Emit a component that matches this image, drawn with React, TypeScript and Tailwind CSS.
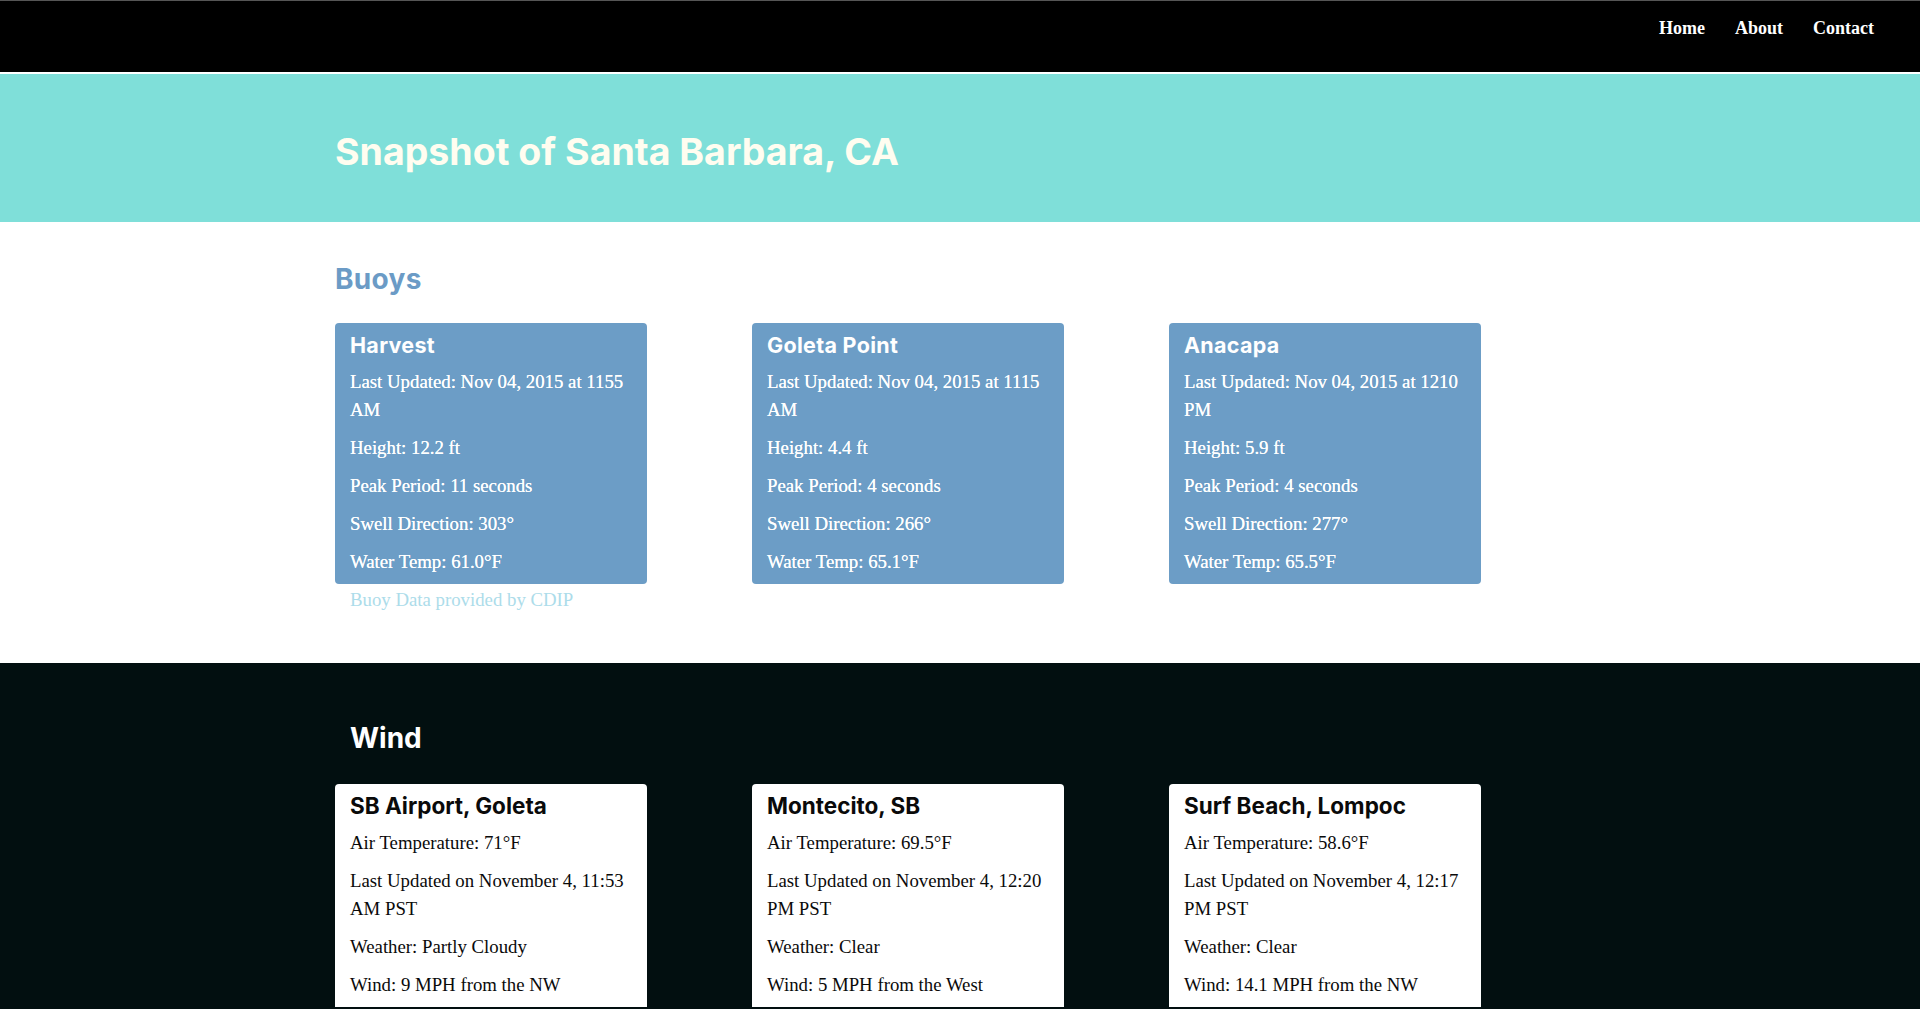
import React from 'react'

type Buoy = {
  name: string
  updated: string
  height: string
  period: string
  direction: string
  temp: string
}

type Station = {
  name: string
  air: string
  updated: string
  weather: string
  wind: string
}

const buoys: Buoy[] = [
  { name: 'Harvest', updated: 'Nov 04, 2015 at 1155 AM', height: '12.2 ft', period: '11 seconds', direction: '303°', temp: '61.0°F' },
  { name: 'Goleta Point', updated: 'Nov 04, 2015 at 1115 AM', height: '4.4 ft', period: '4 seconds', direction: '266°', temp: '65.1°F' },
  { name: 'Anacapa', updated: 'Nov 04, 2015 at 1210 PM', height: '5.9 ft', period: '4 seconds', direction: '277°', temp: '65.5°F' },
]

const stations: Station[] = [
  { name: 'SB Airport, Goleta', air: '71°F', updated: 'November 4, 11:53 AM PST', weather: 'Partly Cloudy', wind: '9 MPH from the NW' },
  { name: 'Montecito, SB', air: '69.5°F', updated: 'November 4, 12:20 PM PST', weather: 'Clear', wind: '5 MPH from the West' },
  { name: 'Surf Beach, Lompoc', air: '58.6°F', updated: 'November 4, 12:17 PM PST', weather: 'Clear', wind: '14.1 MPH from the NW' },
]

const serif = "font-['Liberation_Serif',serif]"
const sans = "font-['Inter',sans-serif]"

function BuoyCard({ buoy }: { buoy: Buoy }) {
  return (
    <div className="rounded-[4px] bg-[#6c9dc6] px-[15px] pt-[8px] pb-[8px] text-white">
      <h3 className={`${sans} mb-[9px] text-[21.5px] leading-[28px] font-bold tracking-[0.3px]`}>{buoy.name}</h3>
      <div className={`${serif} flex flex-col gap-[10px] text-[18.8px] leading-[28px] [text-shadow:0_0_0.5px_#fff]`}>
        <p>Last Updated: {buoy.updated}</p>
        <p>Height: {buoy.height}</p>
        <p>Peak Period: {buoy.period}</p>
        <p>Swell Direction: {buoy.direction}</p>
        <p>Water Temp: {buoy.temp}</p>
      </div>
    </div>
  )
}

function StationCard({ station }: { station: Station }) {
  return (
    <div className="rounded-t-[4px] bg-white px-[15px] pt-[8px] pb-[8px] text-[#0a0a0a]">
      <h3 className={`${sans} mb-[9px] text-[22.5px] leading-[28px] font-bold`}>{station.name}</h3>
      <div className={`${serif} flex flex-col gap-[10px] text-[18.8px] leading-[28px]`}>
        <p>Air Temperature: {station.air}</p>
        <p>Last Updated on {station.updated}</p>
        <p>Weather: {station.weather}</p>
        <p>Wind: {station.wind}</p>
      </div>
    </div>
  )
}

export default function App() {
  return (
    <div className="min-h-screen bg-white">
      {/* nav */}
      <nav className="h-[74px] border-t border-[#555] border-b-2 border-b-white bg-black">
        <ul className={`${serif} flex justify-end gap-[30px] pr-[46px] pt-[15px] text-[18px] leading-[24px] font-bold text-white`}>
          <li>Home</li>
          <li>About</li>
          <li>Contact</li>
        </ul>
      </nav>

      <header className="h-[148px] bg-[#7fdfd9] pl-[335px] pt-[56px]">
        <h1 className={`${sans} text-[37.5px] leading-[44px] font-bold text-[#fffdf0]`}>
          Snapshot of Santa Barbara, CA
        </h1>
      </header>

      <section className="pl-[335px] pt-[40px] h-[441px]">
        <h2 className={`${sans} text-[28px] leading-[34px] font-bold tracking-[0.3px] text-[#6b9bc6]`}>Buoys</h2>
        <div className="mt-[27px] grid grid-cols-[312px_312px_312px] gap-x-[105px] items-start">
          {buoys.map((b, i) => (
            <div key={b.name}>
              <BuoyCard buoy={b} />
              {i === 0 && (
                <p className={`${serif} mt-[2px] pl-[15px] text-[18.8px] leading-[28px] text-[#acdcea]`}>
                  Buoy Data provided by CDIP
                </p>
              )}
            </div>
          ))}
        </div>
      </section>

      <section className="bg-[#020f10] pl-[335px] pt-[58px] pb-[40px]">
        <h2 className={`${sans} pl-[15px] text-[28px] leading-[34px] font-bold text-white`}>Wind</h2>
        <div className="mt-[29px] grid grid-cols-[312px_312px_312px] gap-x-[105px] items-start">
          {stations.map(s => (
            <StationCard key={s.name} station={s} />
          ))}
        </div>
      </section>
    </div>
  )
}
